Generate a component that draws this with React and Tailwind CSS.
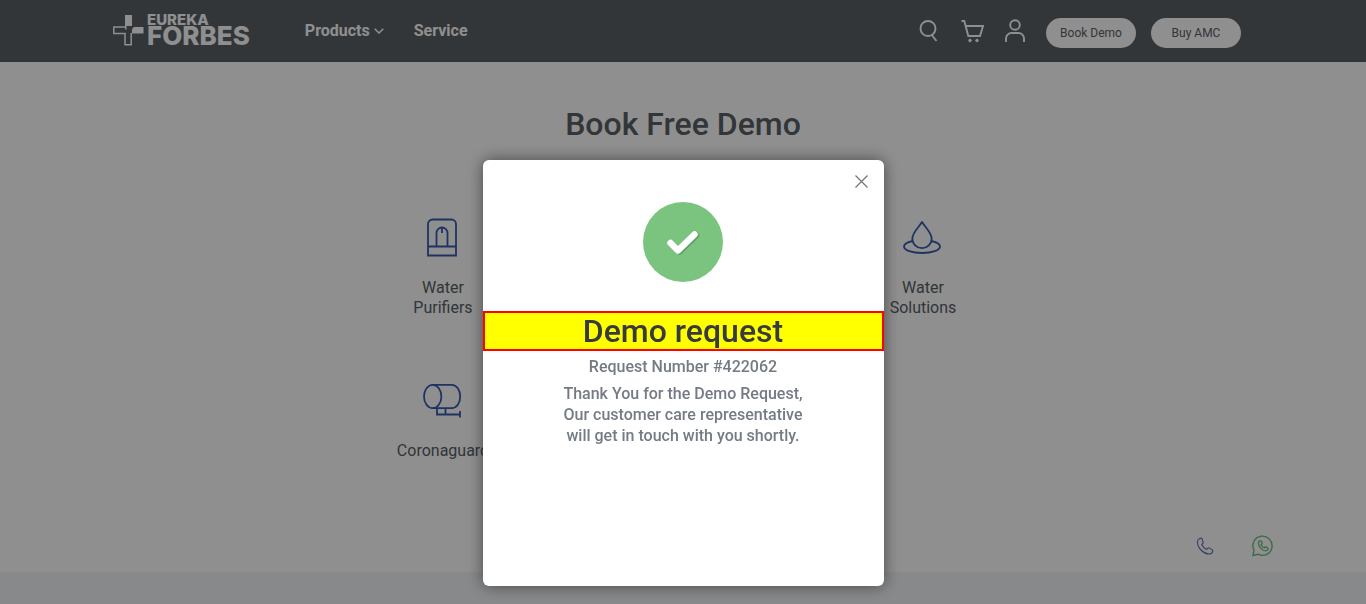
import React from "react";

function Logo() {
  return (
    <a href="#home" aria-label="Eureka Forbes" className="flex items-center gap-[3px] text-white">
      <svg width="31" height="32" viewBox="0 0 31 32" fill="none" aria-hidden="true">
        <path d="M12 0h7v11h-5.500l-1.500 1.500z" fill="currentColor" />
        <path d="M19 14l2-2h9.500v6.500h-11.500z" fill="currentColor" />
        <path d="M12.800 14.500v-2.500H.8v6.500h11.200v11.200h6.200V18" stroke="currentColor" strokeWidth="1.500" />
      </svg>
      <span className="flex flex-col pb-0.5 font-['Inter',sans-serif] font-extrabold">
        <span className="text-[15px] leading-[12px]">EUREKA</span>
        <span className="text-[26px] leading-[20px]">FORBES</span>
      </span>
    </a>
  );
}

function Header() {
  return (
    <header className="h-[62px] bg-[#596066]">
      <div className="mx-auto flex h-full max-w-[1140px] items-center pr-3">
        <Logo />
        <nav className="ml-[55px] flex items-center gap-[30px] text-base font-bold text-white">
          <a href="#products" className="flex items-center gap-1">
            Products
            <svg width="10" height="6" viewBox="0 0 10 6" fill="none" stroke="currentColor" strokeWidth="1.500" aria-hidden="true">
              <path d="M.7.7L5 5 9.300.7" />
            </svg>
          </a>
          <a href="#service">Service</a>
        </nav>
        <div className="ml-auto flex items-center text-white">
          <button type="button" aria-label="Search">
            <svg width="20" height="24" viewBox="0 0 20 24" fill="none" stroke="currentColor" strokeWidth="1.900" aria-hidden="true">
              <circle cx="9" cy="9.500" r="7.500" />
              <path d="M12.800 16L17.500 22" />
            </svg>
          </button>
          <button type="button" aria-label="Cart" className="ml-[22px]">
            <svg width="23" height="24" viewBox="0 0 23 24" fill="none" stroke="currentColor" strokeWidth="1.900" aria-hidden="true">
              <path d="M.5 2h2.800l4 15h11.700l3-10H4.600" />
              <circle cx="9" cy="21.500" r="1.300" fill="currentColor" strokeWidth="1" />
              <circle cx="16" cy="21.500" r="1.300" fill="currentColor" strokeWidth="1" />
            </svg>
          </button>
          <button type="button" aria-label="Account" className="ml-5">
            <svg width="22" height="24" viewBox="0 0 22 24" fill="none" stroke="currentColor" strokeWidth="1.900" aria-hidden="true">
              <circle cx="11" cy="6" r="4.800" />
              <path d="M2 23v-3.500a5.500 5.500 0 0 1 5.500-5.500h7a5.500 5.500 0 0 1 5.500 5.500V23" />
            </svg>
          </button>
          <div className="ml-5 flex gap-[15px] pt-1">
            <button type="button" className="h-[30px] w-[90px] rounded-full bg-white text-xs text-[#596066]">Book Demo</button>
            <button type="button" className="h-[30px] w-[90px] rounded-full bg-white text-xs text-[#596066]">Buy AMC</button>
          </div>
        </div>
      </div>
    </header>
  );
}

function PurifierIcon() {
  return (
    <svg width="40" height="40" viewBox="0 0 40 40" fill="none" stroke="currentColor" strokeWidth="1.800" aria-hidden="true">
      <path d="M5 37.500V6a4.500 4.500 0 0 1 4.500-4.500h19a4.500 4.500 0 0 1 4.500 4.500V37.500zM5 28.500h28" />
      <path d="M13.500 28.500V15a5.500 5.500 0 0 1 11 0V28.500M19 9.500v5.500" />
    </svg>
  );
}

function CoronaguardIcon() {
  return (
    <svg width="40" height="40" viewBox="0 0 40 40" fill="none" stroke="currentColor" strokeWidth="1.800" aria-hidden="true">
      <ellipse cx="9.700" cy="15.500" rx="8.700" ry="11.700" />
      <path d="M9.700 3.800h19C33.700 3.800 37.200 9 37.200 15.500s-3.500 11.700-8.500 11.700h-19" />
      <path d="M14 27.200v6.300H37M22.500 27.200v6.300M37 30v6.500" />
    </svg>
  );
}

function SolutionsIcon() {
  return (
    <svg width="40" height="40" viewBox="0 0 40 40" fill="none" stroke="currentColor" strokeWidth="1.800" strokeLinejoin="round" aria-hidden="true">
      <path d="M19 4c3.500 5.500 9.700 11 9.700 16.500a9.700 9.700 0 0 1-19.400 0C9.300 15 15.500 9.500 19 4z" />
      <path d="M9.500 23c-5 1.200-8.500 3-8.500 5.500 0 3.800 8 6.500 18 6.500s18-2.700 18-6.500c0-2.500-3.500-4.300-8.500-5.500" />
    </svg>
  );
}

function Category({ icon, children, className }) {
  return (
    <a href="#category" className={className}>
      <span className="text-[#355cb0]">{icon}</span>
      <span className="max-w-24 text-center">{children}</span>
    </a>
  );
}

const PHONE =
  "M5.200 1.200C3.500 1.500 1.500 3.200 1.500 5.200c0 6.300 6.800 12.800 12.300 12.800 2 0 3.500-1.500 3.900-3.200.1-.5-.1-.9-.5-1.200l-3.300-2.100c-.5-.3-1-.2-1.400.2l-1.300 1.400C9 12.200 7 10.200 6 8l1.300-1.400c.4-.4.5-.9.2-1.400L6.300 1.700c-.2-.4-.6-.6-1.100-.5z";

function ContactLinks() {
  return (
    <div className="fixed right-[92px] bottom-[47px] flex items-center gap-[38px]">
      <a href="#call" aria-label="Call" className="text-[#5f73b0]">
        <svg width="18" height="18" viewBox="0 0 19 19" fill="none" stroke="currentColor" strokeWidth="1.200" aria-hidden="true">
          <path d={PHONE} />
        </svg>
      </a>
      <a href="#chat" aria-label="WhatsApp" className="text-[#6fc080]">
        <svg width="22" height="22" viewBox="0 0 22 22" fill="none" stroke="currentColor" strokeWidth="1.400" aria-hidden="true">
          <path d="M1 20.500l1-5.300a9.600 9.600 0 1 1 4 4z" />
          <path d={PHONE} transform="translate(5.500 5) scale(.6)" strokeWidth="2.200" />
        </svg>
      </a>
    </div>
  );
}

function ConfirmationDialog() {
  return (
    <div className="fixed inset-0 flex items-start justify-center bg-black/44 pt-40">
      <section
        role="dialog"
        aria-modal="true"
        aria-labelledby="dialog-title"
        className="relative flex min-h-[426px] w-[401px] flex-col items-center rounded-md bg-white pt-[42px] text-center shadow-[0_0_16px_rgba(0,0,0,0.5)]"
      >
        <button type="button" aria-label="Close" className="absolute top-[15px] right-4 text-[#777]">
          <svg width="13" height="13" viewBox="0 0 13 13" fill="none" stroke="currentColor" strokeWidth="1.300" aria-hidden="true">
            <path d="M.5.5l12 12M12.500.5l-12 12" />
          </svg>
        </button>
        <svg width="80" height="80" viewBox="0 0 80 80" fill="none" strokeWidth="6.500" strokeLinecap="round" strokeLinejoin="round" aria-hidden="true">
          <circle cx="40" cy="40" r="40" fill="#7bc47f" />
          <path d="M28.500 42l8 7.500L53 33.500" stroke="#5f9f68" />
          <path d="M27.500 41l7.500 7.500L51.500 32.500" stroke="#fff" />
        </svg>
        <h2 id="dialog-title" className="mt-[29px] w-full border-2 border-[#f00] bg-[#ff0] text-[32px] leading-9 font-medium text-[#373b40]">
          Demo request
        </h2>
        <p className="mt-[5px] text-base leading-[21px] font-medium text-[#747b84]">Request Number #422062</p>
        <p className="mt-[6px] text-base leading-[21px] font-medium text-[#747b84]">
          Thank You for the Demo Request,
          <br />
          Our customer care representative
          <br />
          will get in touch with you shortly.
        </p>
      </section>
    </div>
  );
}

export default function App() {
  return (
    <div className="flex min-h-screen flex-col bg-white font-['Roboto',sans-serif] text-[#596066]">
      <Header />
      <main className="min-h-[510px] pt-[42px]">
        <h1 className="text-center text-[32px] leading-10 font-medium">Book Free Demo</h1>
        <div className="mx-auto mt-[74px] grid max-w-[640px] grid-cols-4 gap-y-[63px] text-base leading-5">
          <Category className="flex flex-col items-center gap-5" icon={<PurifierIcon />}>Water Purifiers</Category>
          <Category className="col-start-4 flex flex-col items-center gap-5" icon={<SolutionsIcon />}>Water Solutions</Category>
          <Category className="flex flex-col items-center gap-5" icon={<CoronaguardIcon />}>Coronaguard</Category>
        </div>
      </main>
      <footer className="min-h-8 grow bg-[#f2f4f7]" />
      <ContactLinks />
      <ConfirmationDialog />
    </div>
  );
}
